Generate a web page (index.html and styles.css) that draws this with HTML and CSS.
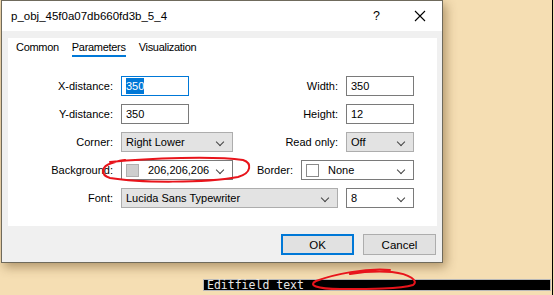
FILE: index.html
```html
<!DOCTYPE html>
<html lang="en">
<head>
    <meta charset="UTF-8">
    <meta name="viewport" content="width=device-width, initial-scale=1.0">
    <title>Object properties</title>
    <link rel="stylesheet" href="styles.css">
</head>
<body>
    <div class="chart">
        <!-- Properties dialog -->
        <div class="dialog">
            <div class="titlebar">
                <span class="title">p_obj_45f0a07db660fd3b_5_4</span>
                <span class="help">?</span>
                <span class="close">
                    <svg width="12" height="12" viewBox="0 0 12 12"><path d="M1 1 L11 11 M11 1 L1 11" stroke="#000" stroke-width="1.1" fill="none"/></svg>
                </span>
            </div>

            <div class="dialog-body">
                <div class="panel">
                    <div class="tabs">
                        <span class="tab">Common</span>
                        <span class="tab active">Parameters</span>
                        <span class="tab">Visualization</span>
                    </div>

                    <div class="form">
                        <label class="lbl">X-distance:</label>
                        <div class="field"><div class="input focused"><span class="selected">350</span></div></div>
                        <label class="lbl">Width:</label>
                        <div class="field"><div class="input">350</div></div>

                        <label class="lbl">Y-distance:</label>
                        <div class="field"><div class="input">350</div></div>
                        <label class="lbl">Height:</label>
                        <div class="field"><div class="input">12</div></div>

                        <label class="lbl">Corner:</label>
                        <div class="combo grey">Right Lower<span class="chev"></span></div>
                        <label class="lbl">Read only:</label>
                        <div class="combo grey">Off<span class="chev"></span></div>

                        <label class="lbl">Background:</label>
                        <div class="combo white"><span class="swatch bg-swatch"></span><span class="color-text">206,206,206</span><span class="chev"></span></div>
                        <div class="border-cell">
                            <label class="lbl">Border:</label>
                            <div class="combo white border-combo"><span class="swatch none-swatch"></span><span class="color-text">None</span><span class="chev"></span></div>
                        </div>

                        <label class="lbl">Font:</label>
                        <div class="combo grey font-combo">Lucida Sans Typewriter<span class="chev"></span></div>
                        <div class="combo white">8<span class="chev"></span></div>
                    </div>
                </div>

                <div class="buttons">
                    <button type="button" class="btn default">OK</button>
                    <button type="button" class="btn">Cancel</button>
                </div>
            </div>
        </div>

        <!-- chart price scale edge -->
        <div class="axis"></div>

        <!-- edit field object on the chart -->
        <div class="editfield">Editfield text</div>

        <!-- hand drawn red marks -->
        <svg class="marks" width="554" height="295" viewBox="0 0 554 295">
            <path d="M110 162 C150 158 215 156 243 160 C252 163 252 173 238 177 C205 183 140 183 110 178 C100 175 101 166 112 163 C118 161 122 160 125 160" stroke="#e8141b" stroke-width="2" fill="none" stroke-linecap="round"/>
            <path d="M390 270 C365 268 335 274 316 281 C308 285 316 289 340 289 C370 289 400 289 413 285 C419 281 410 274 392 272 C378 271 362 272 350 274" stroke="#e8141b" stroke-width="2" fill="none" stroke-linecap="round"/>
        </svg>
    </div>
</body>
</html>
```

FILE: styles.css
```css
/* page = chart window */
body {
    margin: 0;
    padding: 0;
    font-family: "Liberation Sans", Arial, sans-serif;
    font-size: 11px;
    color: #000;
}

.chart {
    position: relative;
    width: 554px;
    height: 295px;
    background-color: #f5deb3;
    overflow: hidden;
}

/* dialog window */
.dialog {
    margin-left: 1px;
    width: 442px;
    height: 263px;
    box-sizing: border-box;
    border: 1px solid #6f6a5c;
    background-color: #f0f0f0;
    box-shadow: 3px 4px 10px rgba(90, 60, 20, 0.45);
    display: flex;
    flex-direction: column;
}

.titlebar {
    height: 30px;
    background-color: #fff;
    display: flex;
    align-items: center;
    padding-left: 9px;
    padding-right: 16px;
    font-size: 11.5px;
}

.title {
    flex: 1;
}

.help {
    margin-right: 34px;
    font-size: 12.5px;
}

.close {
    display: flex;
}

.dialog-body {
    padding: 7px 5px 0 6px;
}

.panel {
    height: 188px;
    background-color: #fff;
}

.tabs {
    display: flex;
    gap: 13px;
    padding-left: 8px;
    letter-spacing: -0.3px;
}

.tab {
    line-height: 15px;
    padding-top: 2px;
    border-bottom: 2px solid transparent;
}

.tab.active {
    border-bottom-color: #0078d7;
}

/* form grid */
.form {
    margin-top: 19px;
    padding-left: 1px;
    display: grid;
    grid-template-columns: 104px 112px 97px 68px;
    grid-auto-rows: 20px;
    column-gap: 8px;
    row-gap: 8px;
}

.lbl {
    display: flex;
    align-items: center;
    justify-content: flex-end;
}

.field {
    display: flex;
}

.input {
    width: 68px;
    height: 20px;
    box-sizing: border-box;
    border: 1px solid #7a7a7a;
    background-color: #fff;
    padding-left: 4px;
    display: flex;
    align-items: center;
}

.input.focused {
    border-color: #0078d7;
}

.selected {
    background-color: #0078d7;
    color: #fff;
    line-height: 16px;
}

.combo {
    position: relative;
    height: 20px;
    box-sizing: border-box;
    padding-left: 4px;
    display: flex;
    align-items: center;
}

.combo.grey {
    background-color: #e3e3e3;
    border: 1px solid #adadad;
}

.combo.white {
    background-color: #fff;
    border: 1px solid #7a7a7a;
}

.chev {
    position: absolute;
    right: 9px;
    top: 6px;
    width: 5px;
    height: 5px;
    border-right: 1px solid #444;
    border-bottom: 1px solid #444;
    transform: rotate(45deg);
}

.swatch {
    width: 13px;
    height: 13px;
    box-sizing: border-box;
    margin-right: 9px;
}

.bg-swatch {
    background-color: #cecece;
    border: 1px solid #b0b0b0;
}

.none-swatch {
    background-color: #fff;
    border: 1px solid #8a8a8a;
}

.border-cell {
    grid-column: 3 / 5;
    display: flex;
    justify-content: flex-end;
    gap: 8px;
}

.border-combo {
    width: 113px;
}

.font-combo {
    grid-column: 2 / 4;
}

/* dialog buttons */
.buttons {
    display: flex;
    justify-content: flex-end;
    gap: 9px;
    margin-top: 8px;
    padding-right: 1px;
}

.btn {
    width: 73px;
    height: 21px;
    font-family: inherit;
    font-size: 11.5px;
    background-color: #e1e1e1;
    border: 1px solid #adadad;
    padding: 0;
}

.btn.default {
    border: 2px solid #0078d7;
}

/* chart bits */
.axis {
    position: absolute;
    top: 0;
    right: 1px;
    width: 1px;
    height: 295px;
    background-color: #000;
}

.editfield {
    position: absolute;
    left: 203px;
    top: 279px;
    width: 348px;
    height: 12px;
    box-sizing: border-box;
    border: 1px solid #b8b8b8;
    background-color: #000;
    color: #e6e6e6;
    font-family: "DejaVu Sans Mono", "Liberation Mono", monospace;
    font-size: 11.5px;
    line-height: 10px;
    padding-left: 3px;
    white-space: pre;
}

.marks {
    position: absolute;
    left: 0;
    top: 0;
}
```
